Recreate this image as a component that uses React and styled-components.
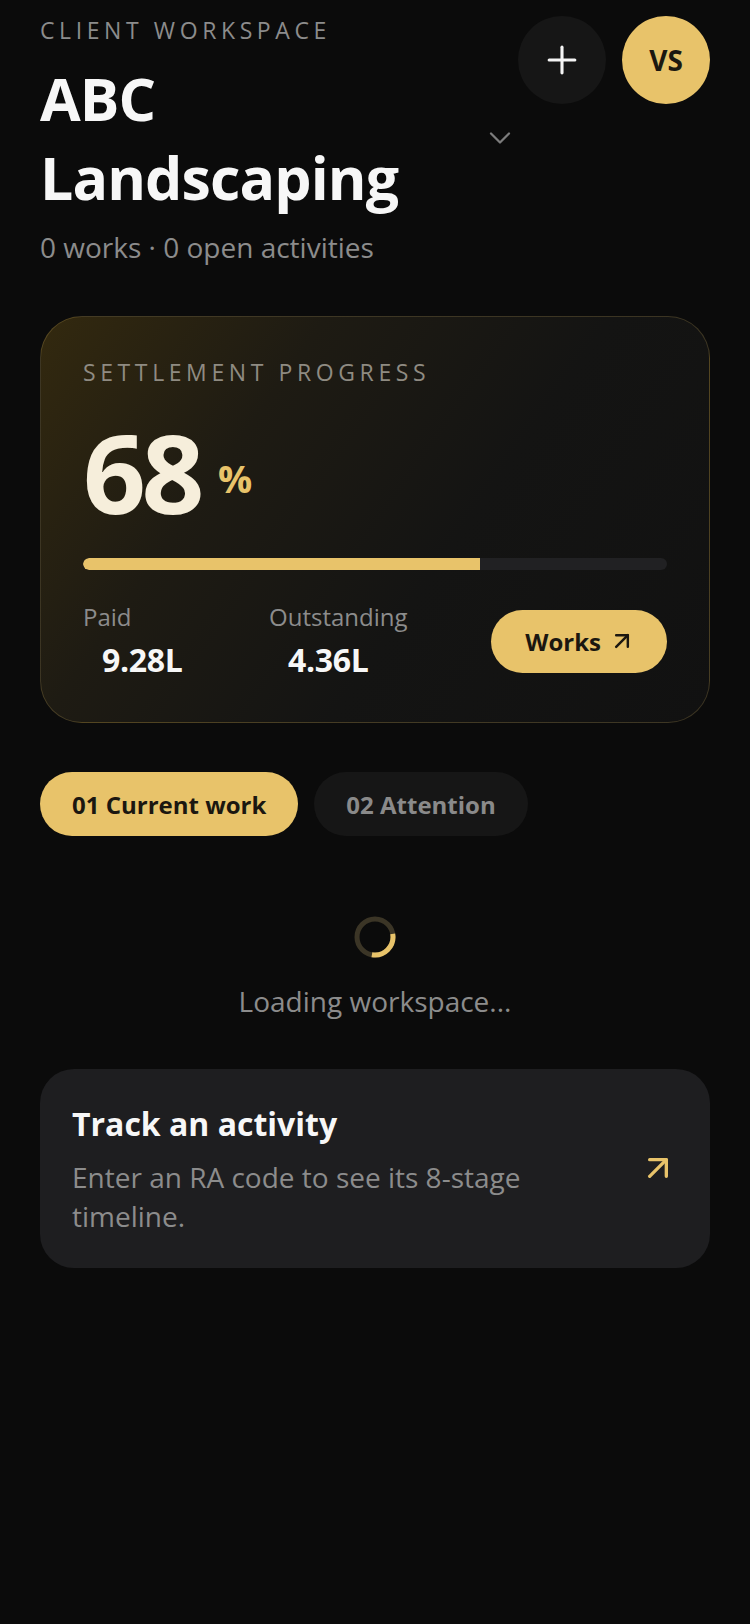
import React from 'react'
import styled, { createGlobalStyle } from 'styled-components'
import { Plus, ChevronDown, ArrowUpRight } from 'lucide-react'

const GOLD = '#e8c36a'

const GlobalStyle = createGlobalStyle`
  html, body {
    margin: 0;
    padding: 0;
    background: #0b0b0b;
  }
  body {
    font-family: 'Open Sans', 'Noto Sans', sans-serif;
    color: #f4f4f4;
  }
  * { box-sizing: border-box; }
`

const Page = styled.div`
  min-height: 1624px;
  padding: 15px 40px 40px;
  background: #0b0b0b;
`

const Header = styled.header`
  display: flex;
  align-items: flex-start;
`

const HeaderMain = styled.div`
  flex: 1;
  min-width: 0;
`

const Eyebrow = styled.div`
  font-size: 23px;
  letter-spacing: 0.2em;
  text-transform: uppercase;
  color: #8c8c8c;
  line-height: 31px;
`

const TitleButton = styled.button`
  display: flex;
  align-items: center;
  justify-content: space-between;
  gap: 12px;
  width: 100%;
  margin-top: 13px;
  padding: 0;
  border: 0;
  background: transparent;
  color: inherit;
  font: inherit;
  text-align: left;
  cursor: pointer;

  svg { flex-shrink: 0; color: #7c7c7c; }
`

const Title = styled.h1`
  margin: 0;
  font-size: 59px;
  font-weight: 700;
  line-height: 79px;
  letter-spacing: -0.015em;
  color: #f7f7f7;
`

const Subtitle = styled.p`
  margin: 11px 0 0;
  font-size: 28px;
  line-height: 38px;
  color: #8c8c8c;
`

const Actions = styled.div`
  display: flex;
  gap: 16px;
  margin-top: 1px;
`

const RoundButton = styled.button`
  width: 88px;
  height: 88px;
  border-radius: 50%;
  border: 0;
  display: flex;
  align-items: center;
  justify-content: center;
  background: ${p => p.$accent ? GOLD : '#161616'};
  color: ${p => p.$accent ? '#1b1710' : '#f4f4f4'};
  font-family: inherit;
  font-size: 28px;
  font-weight: 700;
  cursor: pointer;
`

const ProgressCard = styled.section`
  margin-top: 50px;
  padding: 40px 42px 40px;
  border-radius: 42px;
  border: 1px solid rgba(232, 195, 106, 0.2);
  background: linear-gradient(125deg, #33290f 0%, #1e1b13 30%, #141413 60%, #111111 100%);
`

const CardLabel = styled(Eyebrow)`
  color: #8f8b82;
`

const Figure = styled.div`
  display: flex;
  align-items: center;
  gap: 18px;
  margin-top: 28px;
`

const BigNumber = styled.span`
  font-size: 110px;
  font-weight: 700;
  line-height: 110px;
  letter-spacing: -0.04em;
  color: #f6eedb;
`

const Unit = styled.span`
  font-size: 38px;
  font-weight: 700;
  color: ${GOLD};
  margin-top: 14px;
`

const Track = styled.div`
  height: 12px;
  margin-top: 32px;
  border-radius: 6px;
  background: #212123;
  overflow: hidden;
`

const Fill = styled.div`
  height: 100%;
  background: ${GOLD};
  border-radius: 6px 0 0 6px;
`

const StatsRow = styled.div`
  display: flex;
  align-items: center;
  margin-top: 30px;
`

const Stat = styled.div`
  width: 186px;
`

const StatLabel = styled.div`
  font-size: 24px;
  line-height: 33px;
  color: #8c8c8c;
`

const StatValue = styled.div`
  margin-top: 5px;
  padding-left: 19px;
  font-size: 32px;
  font-weight: 700;
  line-height: 44px;
  letter-spacing: -0.01em;
  color: #f7f7f7;
`

const PillButton = styled.button`
  margin-left: auto;
  height: 63px;
  padding: 0 31px 0 34px;
  display: flex;
  align-items: center;
  gap: 7px;
  border: 0;
  border-radius: 32px;
  background: ${GOLD};
  color: #1b1710;
  font-family: inherit;
  font-size: 24px;
  font-weight: 700;
  cursor: pointer;
`

const Tabs = styled.nav`
  display: flex;
  gap: 16px;
  margin-top: 49px;
`

const Tab = styled.button`
  height: 64px;
  padding: 0 32px;
  border: 0;
  border-radius: 32px;
  background: ${p => p.$active ? GOLD : '#161616'};
  color: ${p => p.$active ? '#1b1710' : '#8a8a8a'};
  font-family: inherit;
  font-size: 24px;
  font-weight: 700;
  cursor: pointer;
`

const Loading = styled.div`
  display: flex;
  flex-direction: column;
  align-items: center;
  gap: 24px;
  padding: 80px 0 49px;
  font-size: 28px;
  line-height: 38px;
  color: #8c8c8c;
`

const TrackCard = styled.button`
  width: 100%;
  display: flex;
  align-items: center;
  justify-content: space-between;
  gap: 24px;
  padding: 35px 32px 32px 32px;
  border: 0;
  border-radius: 34px;
  background: #1e1e20;
  font-family: inherit;
  text-align: left;
  cursor: pointer;

  svg { flex-shrink: 0; color: ${GOLD}; margin-top: -5px; }
`

const TrackTitle = styled.div`
  font-size: 32px;
  font-weight: 700;
  line-height: 40px;
  color: #f7f7f7;
`

const TrackText = styled.div`
  margin-top: 14px;
  max-width: 480px;
  font-size: 28px;
  line-height: 39px;
  color: #8c8c8c;
`

const Spinner = () => (
  <svg width='42' height='42' viewBox='0 0 42 42'>
    <circle cx='21' cy='21' r='18' fill='none' stroke='#3b3526' strokeWidth='5' />
    <path d='M 38.7 17.9 A 18 18 0 0 1 17.9 38.7' fill='none' stroke={GOLD} strokeWidth='5' />
  </svg>
)

export default function App () {
  const paidPct = 68
  return (
    <>
      <GlobalStyle />
      <Page>
        <Header>
          <HeaderMain>
            <Eyebrow>Client workspace</Eyebrow>
            <TitleButton>
              <Title>ABC Landscaping</Title>
              <ChevronDown size={36} strokeWidth={1.5} />
            </TitleButton>
            <Subtitle>0 works · 0 open activities</Subtitle>
          </HeaderMain>
          <Actions>
            <RoundButton aria-label='Add'><Plus size={44} strokeWidth={1.7} /></RoundButton>
            <RoundButton $accent>VS</RoundButton>
          </Actions>
        </Header>

        <ProgressCard>
          <CardLabel>Settlement progress</CardLabel>
          <Figure>
            <BigNumber>{paidPct}</BigNumber>
            <Unit>%</Unit>
          </Figure>
          <Track>
            <Fill style={{ width: `${paidPct}%` }} />
          </Track>
          <StatsRow>
            <Stat>
              <StatLabel>Paid</StatLabel>
              <StatValue>9.28L</StatValue>
            </Stat>
            <Stat>
              <StatLabel>Outstanding</StatLabel>
              <StatValue>4.36L</StatValue>
            </Stat>
            <PillButton>
              Works
              <ArrowUpRight size={28} strokeWidth={2.1} />
            </PillButton>
          </StatsRow>
        </ProgressCard>

        <Tabs>
          <Tab $active>01 Current work</Tab>
          <Tab>02 Attention</Tab>
        </Tabs>

        <Loading>
          <Spinner />
          <span>Loading workspace...</span>
        </Loading>

        <TrackCard>
          <div>
            <TrackTitle>Track an activity</TrackTitle>
            <TrackText>Enter an RA code to see its 8-stage timeline.</TrackText>
          </div>
          <ArrowUpRight size={40} strokeWidth={2} />
        </TrackCard>
      </Page>
    </>
  )
}
